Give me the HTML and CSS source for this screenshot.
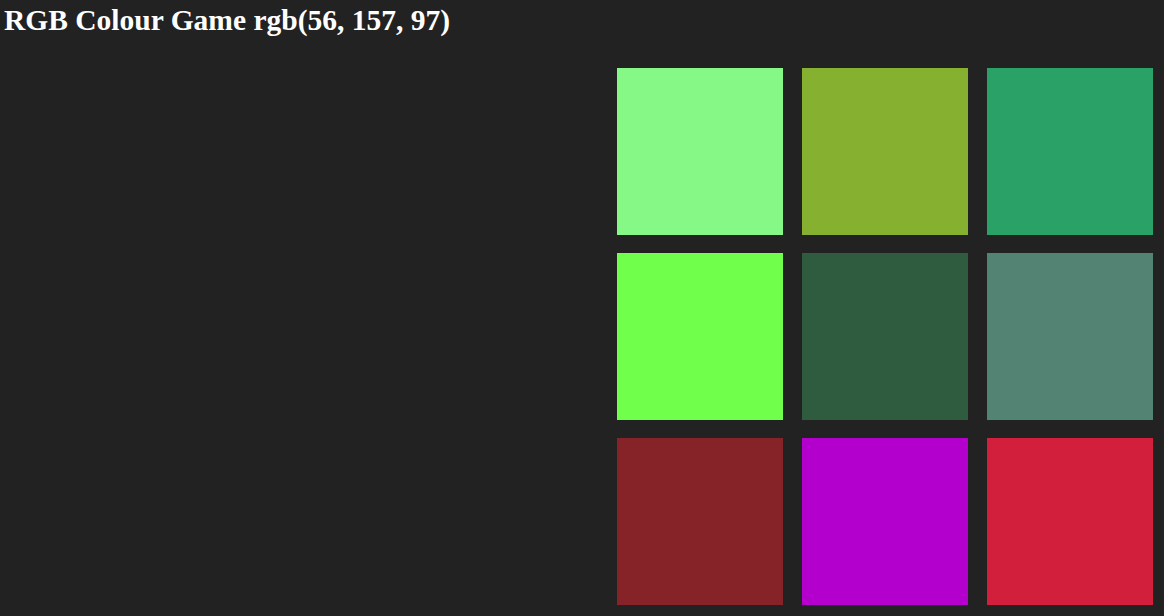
FILE: index.html
```html
<!DOCTYPE html>
<html>
<head>
<meta charset="utf-8">
<link rel="stylesheet" href="styles.css">
</head>
<body>
<h1 class="title">RGB Colour Game <span class="target">rgb(56, 157, 97)</span></h1>
<div class="board">
  <div class="square" style="background:#86f886"></div>
  <div class="square" style="background:#85b030"></div>
  <div class="square" style="background:#29a167"></div>
  <div class="square" style="background:#70ff4a"></div>
  <div class="square" style="background:#2f5b3e"></div>
  <div class="square" style="background:#538473"></div>
  <div class="square" style="background:#862329"></div>
  <div class="square" style="background:#b300cc"></div>
  <div class="square" style="background:#d2203c"></div>
</div>
</body>
</html>
```
FILE: styles.css
```css
html, body {
  margin: 0;
  padding: 0;
  background: #222222;
  height: 100%;
  overflow: hidden;
}
body {
  font-family: "Liberation Serif", "Times New Roman", serif;
  color: #ffffff;
}
.title {
  margin: 0;
  padding: 3px 0 0 4px;
  font-size: 29.5px;
  font-weight: bold;
  line-height: 34px;
}
.board {
  display: grid;
  grid-template-columns: repeat(3, 166.5px);
  grid-auto-rows: 166.5px;
  gap: 18.6px;
  justify-content: end;
  padding: 31px 10.7px 0 0;
}
```
